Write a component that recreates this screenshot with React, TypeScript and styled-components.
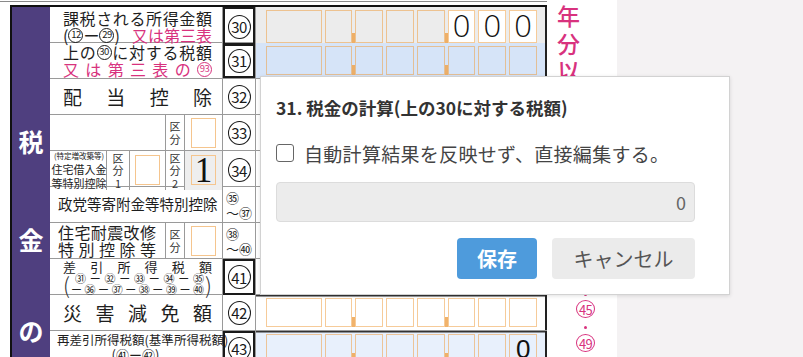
import styled, { createGlobalStyle } from 'styled-components'

const JP = '"Noto Sans CJK JP", "Noto Sans", sans-serif'
const PINK = '#d8327e'
const LINE = '#9a9a9a'
const INK = '#1e1e1e'

const GlobalStyle = createGlobalStyle`
  * { box-sizing: border-box; }
  html, body { margin: 0; height: 100%; overflow: hidden; }
  body { background: #f4f2f3; font-family: ${JP}; color: ${INK}; }
`

const Root = styled.div`
  position: relative;
  width: 803px;
  height: 357px;
  overflow: hidden;
`

const Page = styled.div`
  width: 617px;
  height: 357px;
  background: #fff;
  overflow: hidden;
`

const TopRule = styled.div`
  width: 547px;
  height: 1px;
  margin-top: 1px;
  background: #8a8a8a;
`

const Form = styled.div`
  display: flex;
  margin: 3px 0 0 10px;
`

const Side = styled.div`
  width: 40px;
  background: #4f3f7f;
  border-left: 2px solid #111;
  border-top: 2px solid #111;
  display: flex;
  flex-direction: column;
  align-items: center;
  padding-top: 119px;
  color: #fff;
  font-size: 25px;
  font-weight: 700;
  line-height: 30px;
`

const SideChar = styled.span<{ $gap: number }>`
  margin-top: ${p => p.$gap}px;
`

const Table = styled.div`
  width: 497px;
  border-top: 2px solid #111;
  display: flex;
  flex-direction: column;
`

const Row = styled.div`
  display: grid;
  grid-template-columns: 173px 33px 291px;
  height: 36px;
  border-bottom: 1px solid ${LINE};
`

const Label = styled.div<{ $pad?: string; $align?: string }>`
  display: flex;
  flex-direction: column;
  justify-content: ${p => p.$align ?? 'center'};
  padding: ${p => p.$pad ?? '0 10px 0 13px'};
  border-right: 1px solid ${LINE};
`

const SplitLabel = styled.div<{ $cols: string }>`
  display: grid;
  grid-template-columns: ${p => p.$cols};
  border-right: 1px solid ${LINE};
`

const Sub = styled.div<{ $fill?: string; $last?: boolean; $pad?: string; $stretch?: boolean }>`
  display: flex;
  flex-direction: column;
  align-items: ${p => (p.$stretch ? 'stretch' : 'center')};
  justify-content: center;
  padding: ${p => p.$pad ?? '0'};
  border-right: ${p => (p.$last ? 'none' : `1px solid ${LINE}`)};
  background: ${p => p.$fill ?? 'transparent'};
`

const Spread = styled.div<{ $size: number; $lh?: number; $color?: string; $indent?: number }>`
  display: flex;
  justify-content: space-between;
  align-items: center;
  padding-left: ${p => p.$indent ?? 0}px;
  font-size: ${p => p.$size}px;
  line-height: ${p => p.$lh ?? p.$size + 2}px;
  color: ${p => p.$color ?? INK};
`

const Line = styled.div<{ $size: number; $lh?: number; $center?: boolean }>`
  display: flex;
  justify-content: ${p => (p.$center ? 'center' : 'space-between')};
  align-items: center;
  font-size: ${p => p.$size}px;
  line-height: ${p => p.$lh ?? p.$size + 1}px;
  white-space: nowrap;
`

const Group = styled.span`
  display: inline-flex;
  align-items: center;
`

const Pink = styled.span`
  color: ${PINK};
`

const Tiny = styled.div<{ $size: number }>`
  font-size: ${p => p.$size}px;
  line-height: ${p => p.$size + 3}px;
  white-space: nowrap;
  color: #222;
`

const Kubun = styled.div`
  display: flex;
  flex-direction: column;
  align-items: center;
  font-size: 11px;
  line-height: 12.5px;
  color: #333;
`

const Box = styled.div<{ $fill?: string }>`
  width: 25px;
  height: 30px;
  border: 1px solid #f5c58e;
  background: ${p => p.$fill ?? '#fff'};
  display: flex;
  align-items: center;
  justify-content: center;
  font-family: "Liberation Serif", serif;
  font-size: 35px;
  line-height: 1;
  color: #111;
`

const NumCell = styled.div<{ $heavy?: boolean }>`
  display: flex;
  align-items: center;
  justify-content: center;
  border-right: 1px solid ${LINE};
  box-shadow: ${p => (p.$heavy ? 'inset 0 0 0 2px #1a1a1a' : 'none')};
`

const RangeNum = styled.div`
  display: flex;
  flex-direction: column;
  align-items: flex-start;
  justify-content: center;
  padding-left: 3px;
  border-right: 1px solid ${LINE};
  font-size: 13px;
  line-height: 15px;
  color: #222;
`

const Circle = styled.span<{ $w: number; $h: number; $size: number; $color?: string }>`
  display: inline-flex;
  flex: none;
  align-items: center;
  justify-content: center;
  width: ${p => p.$w}px;
  height: ${p => p.$h}px;
  border: 1.2px solid ${p => p.$color ?? '#1a1a1a'};
  border-radius: 50%;
  color: ${p => p.$color ?? '#1a1a1a'};
  font-size: ${p => p.$size}px;
  letter-spacing: -0.6px;
  line-height: 1;
`

const Formula = styled.div`
  display: flex;
  align-items: center;
  gap: 1px;
`

const Paren = styled.span`
  font-size: 22px;
  line-height: 22px;
  font-weight: 300;
  color: #333;
`

const FormulaLines = styled.div`
  flex: 1;
  display: flex;
  flex-direction: column;
`

const Digits = styled.div<{ $bg?: string; $rule?: boolean }>`
  display: grid;
  grid-template-columns: 2fr repeat(7, 1fr);
  column-gap: 3px;
  padding: 3px 8px 3px 10px;
  background: ${p => p.$bg ?? '#fff'};
  border-right: 2px solid #222;
  box-shadow: ${p => (p.$rule ? 'inset 0 1.5px 0 #333' : 'none')};
`

const Blank = styled.div`
  border-right: 2px solid #222;
`

const Cell = styled.div<{ $fill?: string; $sep?: boolean; $plain?: boolean }>`
  position: relative;
  border: 1px solid rgba(238, 160, 70, 0.55);
  background: ${p => p.$fill ?? 'transparent'};
  display: flex;
  align-items: ${p => (p.$plain ? 'flex-end' : 'center')};
  justify-content: center;
  font-family: ${p => (p.$plain ? '"Liberation Sans", Arial, sans-serif' : '"DejaVu Sans", sans-serif')};
  font-size: ${p => (p.$plain ? 26 : 31)}px;
  font-weight: 300;
  line-height: 1;
  color: #111;

  &::before {
    content: '';
    display: ${p => (p.$sep ? 'block' : 'none')};
    position: absolute;
    left: -4px;
    bottom: -1px;
    width: 3px;
    height: 10px;
    background: rgba(238, 165, 80, 0.85);
  }
`

const Aside = styled.div`
  width: 70px;
  display: flex;
  flex-direction: column;
  color: ${PINK};
`

const Banner = styled.div`
  height: 286px;
  margin-top: -3px;
  padding-left: 10px;
  display: flex;
  flex-direction: column;
  font-size: 23px;
  font-weight: 500;
  line-height: 27.5px;
  overflow: hidden;
`

const Marks = styled.div`
  display: flex;
  flex-direction: column;
  align-items: center;
  padding-left: 7px;
`

const Dot = styled.span<{ $m: string }>`
  width: 3px;
  height: 3px;
  border-radius: 50%;
  background: ${PINK};
  margin: ${p => p.$m};
`

const Dialog = styled.div`
  position: absolute;
  left: 260px;
  top: 76px;
  width: 470px;
  height: 219px;
  background: #fff;
  border: 1px solid #d2d2d2;
  box-shadow: 0 1px 4px rgba(0, 0, 0, 0.12);
  padding: 19px 34px 0 15px;
  display: flex;
  flex-direction: column;
`

const Title = styled.h2`
  margin: 0;
  font-size: 17.5px;
  font-weight: 700;
  line-height: 24px;
  color: #333;
`

const CheckRow = styled.label`
  display: flex;
  align-items: center;
  gap: 10px;
  margin-top: 21px;
  height: 24px;
  font-size: 19px;
  letter-spacing: 0.3px;
  color: #444;
  white-space: nowrap;
`

const Check = styled.input`
  appearance: none;
  margin: 0;
  flex: none;
  width: 18px;
  height: 18px;
  border: 1.5px solid #666;
  border-radius: 3px;
  background: #fff;
`

const Amount = styled.input`
  margin-top: 17px;
  height: 40px;
  width: 100%;
  border: 1px solid #dcdcdc;
  border-radius: 4px;
  background: #ececec;
  padding: 0 8px;
  text-align: right;
  font-family: ${JP};
  font-size: 18px;
  color: #666;
  outline: none;
`

const Actions = styled.div`
  display: flex;
  justify-content: flex-end;
  gap: 15px;
  margin-top: 16px;
`

const Button = styled.button<{ $primary?: boolean; $w: number }>`
  width: ${p => p.$w}px;
  height: 41px;
  border: none;
  border-radius: 4px;
  background: ${p => (p.$primary ? '#4e9bdc' : '#ebebeb')};
  color: ${p => (p.$primary ? '#fff' : '#555')};
  font-family: ${JP};
  font-size: 20px;
  font-weight: ${p => (p.$primary ? 700 : 400)};
  cursor: pointer;
`

const chars = (text: string) => Array.from(text).map((c, i) => <span key={i}>{c}</span>)

function Num({ n }: { n: number }) {
  return <Circle $w={23} $h={24} $size={15}>{n}</Circle>
}

function Ring({ n, color }: { n: number; color?: string }) {
  return <Circle $w={15} $h={15} $size={9.5} $color={color}>{n}</Circle>
}

function DigitRow({ bg, rule, values = [], fills = [], plain }: {
  bg?: string
  rule?: boolean
  values?: string[]
  fills?: (string | undefined)[]
  plain?: boolean
}) {
  return (
    <Digits $bg={bg} $rule={rule}>
      {Array.from({ length: 8 }).map((_, i) => (
        <Cell key={i} $sep={i === 2 || i === 5} $fill={fills[i]} $plain={plain}>
          {values[i] ?? ''}
        </Cell>
      ))}
    </Digits>
  )
}

export default function App() {
  return (
    <Root>
      <GlobalStyle />
      <Page>
        <TopRule />
        <Form>
          <Side>
            <SideChar $gap={0}>税</SideChar>
            <SideChar $gap={68}>金</SideChar>
            <SideChar $gap={61}>の</SideChar>
          </Side>

          <Table>
            <Row>
              <Label>
                <Spread $size={16} $lh={17}>{chars('課税される所得金額')}</Spread>
                <Line $size={16} $lh={17}>
                  <Group>(<Ring n={12} />ー<Ring n={29} />)</Group>
                  <Pink>又は第三表</Pink>
                </Line>
              </Label>
              <NumCell $heavy><Num n={30} /></NumCell>
              <DigitRow
                bg="#ececec"
                values={['', '', '', '', '', '0', '0', '0']}
                fills={[undefined, undefined, undefined, undefined, undefined, '#fff', '#fff', '#fff']}
              />
            </Row>

            <Row>
              <Label>
                <Spread $size={16} $lh={17}>
                  {chars('上の')}
                  <Ring n={30} />
                  {chars('に対する税額')}
                </Spread>
                <Spread $size={16} $lh={17} $color={PINK}>
                  {chars('又は第三表の')}
                  <Ring n={93} color={PINK} />
                </Spread>
              </Label>
              <NumCell $heavy><Num n={31} /></NumCell>
              <DigitRow bg="#d6e4f8" />
            </Row>

            <Row>
              <Label>
                <Spread $size={19}>{chars('配当控除')}</Spread>
              </Label>
              <NumCell><Num n={32} /></NumCell>
              <Blank />
            </Row>

            <Row>
              <SplitLabel $cols="116px 19px 1fr">
                <Sub />
                <Sub><Kubun><span>区</span><span>分</span></Kubun></Sub>
                <Sub $last><Box /></Sub>
              </SplitLabel>
              <NumCell><Num n={33} /></NumCell>
              <Blank />
            </Row>

            <Row>
              <SplitLabel $cols="57px 23px 36px 19px 1fr">
                <Sub $pad="0 0 0 2px">
                  <Tiny $size={7.5}>(特定増改築等)</Tiny>
                  <Tiny $size={11}>住宅借入金</Tiny>
                  <Tiny $size={11}>等特別控除</Tiny>
                </Sub>
                <Sub><Kubun><span>区</span><span>分</span><span>1</span></Kubun></Sub>
                <Sub><Box /></Sub>
                <Sub><Kubun><span>区</span><span>分</span><span>2</span></Kubun></Sub>
                <Sub $last $fill="#eeeeee"><Box $fill="#eeeeee">1</Box></Sub>
              </SplitLabel>
              <NumCell><Num n={34} /></NumCell>
              <Blank />
            </Row>

            <Row>
              <Label $pad="0 7px 0 8px">
                <Spread $size={14.5}>{chars('政党等寄附金等特別控除')}</Spread>
              </Label>
              <RangeNum>
                <span>㉟</span>
                <span>～㊲</span>
              </RangeNum>
              <Blank />
            </Row>

            <Row>
              <SplitLabel $cols="116px 19px 1fr">
                <Sub $stretch $pad="0 9px 0 8px">
                  <Spread $size={16} $lh={17}>{chars('住宅耐震改修')}</Spread>
                  <Spread $size={16} $lh={17}>{chars('特別控除等')}</Spread>
                </Sub>
                <Sub><Kubun><span>区</span><span>分</span></Kubun></Sub>
                <Sub $last><Box /></Sub>
              </SplitLabel>
              <RangeNum>
                <span>㊳</span>
                <span>～㊵</span>
              </RangeNum>
              <Blank />
            </Row>

            <Row>
              <Label $align="flex-start" $pad="1px 10px 0 13px">
                <Spread $size={13} $lh={13}>{chars('差引所得税額')}</Spread>
                <Formula>
                  <Paren>(</Paren>
                  <FormulaLines>
                    <Spread $size={11} $lh={11} $indent={4}>{chars('㉛ー㉜ー㉝ー㉞ー㉟')}</Spread>
                    <Spread $size={11} $lh={11}>{chars('ー㊱ー㊲ー㊳ー㊴ー㊵')}</Spread>
                  </FormulaLines>
                  <Paren>)</Paren>
                </Formula>
              </Label>
              <NumCell $heavy><Num n={41} /></NumCell>
              <Blank />
            </Row>

            <Row>
              <Label>
                <Spread $size={19}>{chars('災害減免額')}</Spread>
              </Label>
              <NumCell><Num n={42} /></NumCell>
              <DigitRow rule />
            </Row>

            <Row>
              <Label $align="flex-start" $pad="2px 8px 0 7px">
                <Spread $size={12.5} $lh={14}>{chars('再差引所得税額(基準所得税額)')}</Spread>
                <Line $size={13} $lh={16} $center>(㊶ー㊷)</Line>
              </Label>
              <NumCell $heavy><Num n={43} /></NumCell>
              <DigitRow bg="#e8f0fc" rule plain values={['', '', '', '', '', '', '', '0']} />
            </Row>
          </Table>

          <Aside>
            <Banner>{chars('年分以降用')}</Banner>
            <Marks>
              <Dot $m="5px 0 4px" />
              <Circle $w={19} $h={18} $size={13} $color={PINK}>45</Circle>
              <Dot $m="8px 0 5px" />
              <Circle $w={19} $h={18} $size={13} $color={PINK}>49</Circle>
            </Marks>
          </Aside>
        </Form>
      </Page>

      <Dialog>
        <Title>31. 税金の計算(上の30に対する税額)</Title>
        <CheckRow>
          <Check type="checkbox" />
          自動計算結果を反映せず、直接編集する。
        </CheckRow>
        <Amount readOnly value="0" />
        <Actions>
          <Button $primary $w={80}>保存</Button>
          <Button $w={143}>キャンセル</Button>
        </Actions>
      </Dialog>
    </Root>
  )
}
